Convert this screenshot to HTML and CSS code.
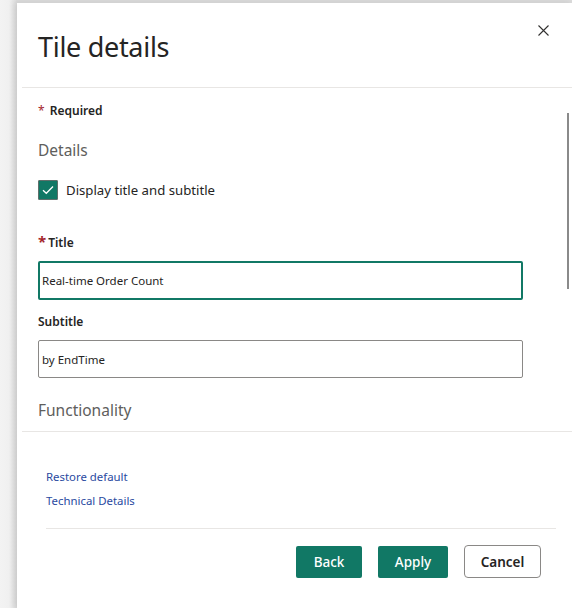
FILE: index.html
```html
<!DOCTYPE html>
<html lang="en">
<head>
<meta charset="utf-8">
<title>Tile details</title>
<link rel="stylesheet" href="styles.css">
</head>
<body>
<div class="backdrop">
  <aside class="panel">
    <header class="panel-header">
      <h1 class="panel-title">Tile details</h1>
      <button class="close-btn" aria-label="Close">
        <svg width="11" height="11" viewBox="0 0 11 11"><path d="M0.5 0.5 L10.5 10.5 M10.5 0.5 L0.5 10.5" stroke="#323130" stroke-width="1.1" fill="none"/></svg>
      </button>
    </header>
    <div class="panel-body">
      <div class="scroll-thumb"></div>
      <div class="required"><span class="star">*</span> Required</div>
      <h2 class="section-title">Details</h2>
      <label class="check-row">
        <span class="checkbox">
          <svg width="12" height="10" viewBox="0 0 12 10"><path d="M1 5.2 L4.3 8.3 L11 1.5" stroke="#ffffff" stroke-width="1.3" fill="none"/></svg>
        </span>
        <span class="check-label">Display title and subtitle</span>
      </label>
      <div class="field-label field-title"><span class="star big">*</span> Title</div>
      <div class="input focused">Real-time Order Count</div>
      <div class="field-label field-sub">Subtitle</div>
      <div class="input">by EndTime</div>
      <h2 class="section-title func">Functionality</h2>
    </div>
    <footer class="panel-footer">
      <div class="links">
        <a class="link">Restore default</a>
        <a class="link">Technical Details</a>
      </div>
      <div class="actions">
        <button class="btn primary back">Back</button>
        <button class="btn primary apply">Apply</button>
        <button class="btn secondary">Cancel</button>
      </div>
    </footer>
  </aside>
</div>
</body>
</html>
```

FILE: styles.css
```css
* { box-sizing: border-box; }
html, body { margin: 0; padding: 0; }
body {
  width: 572px;
  height: 608px;
  overflow: hidden;
  background: #ebebeb;
  font-family: "Noto Sans", "Open Sans", sans-serif;
  color: #252423;
}
.backdrop {
  height: 608px;
  padding: 3px 0 0 17px;
  background: linear-gradient(to right, #f3f3f3 0, #f0f0f0 9px, #dadada 17px);
  display: flex;
}
.panel {
  flex: 1;
  background: #ffffff;
  display: flex;
  flex-direction: column;
  box-shadow: -3px 0 6px rgba(0,0,0,0.08);
}
.panel-header {
  height: 85px;
  margin-left: 5px;
  border-bottom: 1px solid #e8e6e4;
  display: flex;
  justify-content: space-between;
  align-items: flex-start;
  padding: 26px 0 0 16px;
}
.panel-title {
  margin: 0;
  font-size: 27px;
  line-height: 36px;
  font-weight: 400;
  color: #252423;
  letter-spacing: -0.3px;
}
.close-btn {
  border: 0;
  background: none;
  padding: 0;
  margin: -4px 23px 0 0;
  width: 11px;
  height: 11px;
  display: flex;
}
.panel-body {
  position: relative;
  height: 344px;
  padding: 15px 49px 0 16px;
  border-bottom: 1px solid #e8e6e4;
  margin-left: 5px;
}
.scroll-thumb {
  position: absolute;
  right: 3px;
  top: 25px;
  width: 2px;
  height: 176px;
  background: #8a8a8a;
}
.required {
  font-size: 12px;
  line-height: 16px;
  font-weight: 600;
  color: #252423;
}
.star { color: #a4262c; font-weight: 400; margin-right: 2px; }
.star.big { font-size: 15px; font-weight: 700; }
.section-title {
  margin: 20px 0 0;
  font-size: 15.5px;
  line-height: 22px;
  font-weight: 400;
  color: #605e5c;
}
.check-row {
  margin-top: 19px;
  display: flex;
  align-items: center;
  height: 20px;
}
.checkbox {
  width: 20px;
  height: 20px;
  background: #117865;
  border: 1px solid #5f6f6b;
  border-radius: 1px;
  display: flex;
  align-items: center;
  justify-content: center;
}
.check-label {
  margin-left: 8px;
  font-size: 13.2px;
  color: #252423;
}
.field-label {
  font-size: 12px;
  line-height: 16px;
  font-weight: 600;
  color: #252423;
}
.field-title { margin-top: 33px; display: flex; align-items: baseline; }
.field-sub { margin-top: 14px; }
.input {
  margin-top: 10px;
  width: 485px;
  height: 38px;
  border: 1px solid #8a8886;
  border-radius: 2px;
  padding: 0 0 0 3px;
  display: flex;
  align-items: center;
  font-size: 11.5px;
  color: #252423;
}
.input.focused {
  height: 39px;
  border: 2px solid #117865;
  padding-left: 2px;
}
.field-sub + .input { margin-top: 10px; }
.section-title.func { margin-top: 21px; }
.panel-footer {
  flex: 1;
  padding: 37px 16px 0 29px;
}
.links {
  display: flex;
  flex-direction: column;
  gap: 8px;
  padding-bottom: 19px;
  border-bottom: 1px solid #e8e6e4;
}
.link {
  font-size: 11.4px;
  line-height: 16px;
  color: #2a4a9f;
}
.actions {
  display: flex;
  justify-content: flex-end;
  gap: 16px;
  padding: 17px 15px 0 0;
}
.btn {
  height: 32px;
  border-radius: 2px;
  font-family: inherit;
  font-size: 13.5px;
  font-weight: 500;
  padding: 0;
}
.btn.primary {
  background: #117865;
  color: #ffffff;
  border: 0;
}
.btn.back { width: 66px; }
.btn.apply { width: 70px; }
.btn.secondary {
  width: 77px;
  margin-top: -1px;
  height: 33px;
  background: #ffffff;
  color: #252423;
  border: 1px solid #8a8886;
  border-radius: 4px;
  font-weight: 600;
}
```
